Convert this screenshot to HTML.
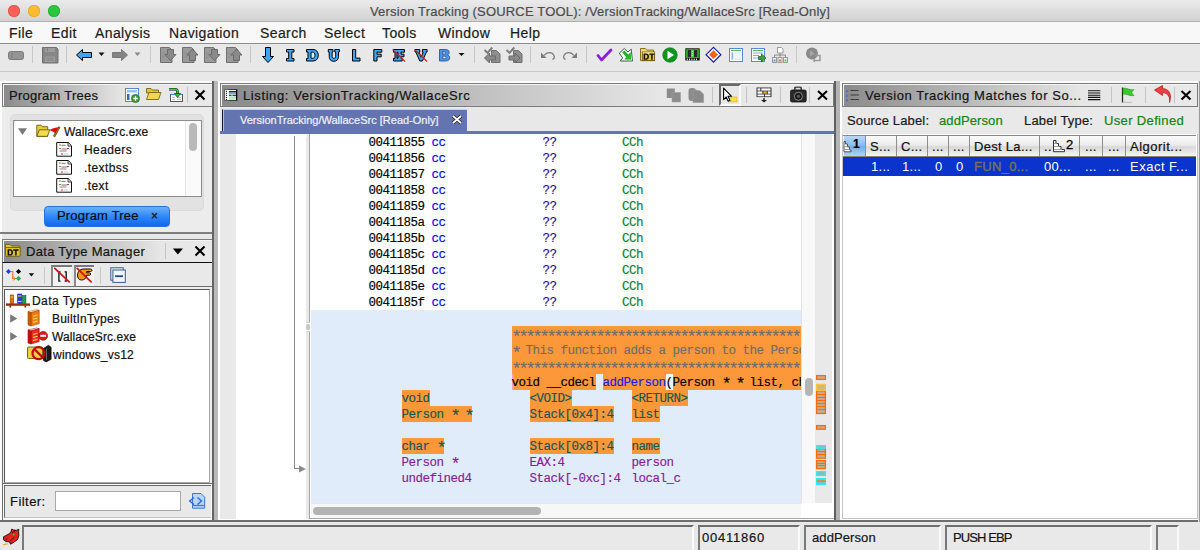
<!DOCTYPE html>
<html><head><meta charset="utf-8">
<style>
*{margin:0;padding:0;box-sizing:border-box}
html,body{width:1200px;height:550px;overflow:hidden;background:#e8e8e8;font-family:"Liberation Sans",sans-serif;font-size:13px;color:#111;position:relative}
div,span,svg{position:absolute}
.i{position:relative}
.st{font-size:17px;letter-spacing:-3.2px;line-height:0;top:3px}
.mono{-webkit-text-stroke:0.15px currentColor;font-family:"Liberation Mono",monospace;font-size:12.5px;letter-spacing:-0.5px;white-space:pre;line-height:16px}
.txt{white-space:nowrap;line-height:1;-webkit-text-stroke:0.2px currentColor}
#title{left:0;top:0;width:1200px;height:22px;background:linear-gradient(#ebebeb,#d2d2d2);border-bottom:1px solid #b1b1b1}
#menu{left:0;top:22px;width:1200px;height:22px;background:#f8f8f8;border-bottom:1px solid #8e8e8e}
#menu span{-webkit-text-stroke:0.2px #1c1c1c;top:4px;font-size:14px;letter-spacing:0.4px;color:#1c1c1c;line-height:14px}
#tb{left:0;top:44px;width:1200px;height:28px;background:#e8e8e8;border-bottom:1px solid #c8c8c8}
.sep{width:1px;background:#c9c9c9}
.hdr{height:24px;border:1px solid #7c7c7c;background:linear-gradient(90deg,#8e8e8e 0%,#e6e6e6 56%,#ebebeb 100%);box-shadow:inset 1px 1px 0 #f4f4f4}
.hdr .t{-webkit-text-stroke:0.2px #141414;top:5px;font-size:13px;color:#141414;line-height:13px;white-space:nowrap}
.hsep{top:3px;height:16px;width:1px;background:#c4c4c4}
</style></head><body>
<!-- TITLE -->
<div id="title">
  <div style="left:8px;top:5px;width:12px;height:12px;border-radius:6px;background:#fc5f57;box-shadow:inset 0 0 0 0.6px #de4a41"></div>
  <div style="left:28px;top:5px;width:12px;height:12px;border-radius:6px;background:#fdbb2e;box-shadow:inset 0 0 0 0.6px #dd9d29"></div>
  <div style="left:48px;top:5px;width:12px;height:12px;border-radius:6px;background:#2ac640;box-shadow:inset 0 0 0 0.6px #1fa832"></div>
  <span class="txt" style="left:370px;top:5px;font-size:13px;letter-spacing:0.17px;color:#4b4b4b">Version Tracking (SOURCE TOOL): /VersionTracking/WallaceSrc [Read-Only]</span>
</div>
<!-- MENU -->
<div id="menu">
  <span style="left:9px">File</span>
  <span style="left:51px">Edit</span>
  <span style="left:95px">Analysis</span>
  <span style="left:169px">Navigation</span>
  <span style="left:260px">Search</span>
  <span style="left:324px">Select</span>
  <span style="left:382px">Tools</span>
  <span style="left:438px">Window</span>
  <span style="left:510px">Help</span>
</div>
<!-- TOOLBAR -->
<div id="tb">
  <!-- TBICONS -->
</div>

<!-- LEFT COLUMN -->
<div style="left:0;top:81px;width:212px;height:2px;background:#fbfbfb"></div>
<div style="left:0;top:81px;width:2px;height:439px;background:#fbfbfb"></div>
<div style="left:220px;top:81px;width:614px;height:2px;background:#fbfbfb"></div>
<div style="left:842px;top:81px;width:358px;height:2px;background:#fbfbfb"></div>
<!-- Program Trees panel -->
<div style="left:2px;top:83px;width:211px;height:149px;background:#ececec;border-right:1px solid #9a9a9a"></div>
<div class="hdr" style="left:2px;top:83px;width:211px;background:linear-gradient(90deg,#8a8a8a 0,#e6e6e6 120px,#e9e9e9)"><span class="t" style="left:6px;letter-spacing:0.25px">Program Trees</span>
  <div class="hsep" style="left:184px"></div>
</div>
<div style="left:10px;top:114px;width:194px;height:97px;background:#e2e2e2;border-radius:5px;border:1px solid #dadada"></div>
<div style="left:13px;top:120px;width:189px;height:77px;background:#fff;border:1px solid #8c8c8c"></div>
<div style="left:185px;top:121px;width:16px;height:75px;background:#fafafa;border-left:1px solid #e6e6e6"></div>
<div style="left:189px;top:123px;width:8px;height:28px;background:#b9b9b9;border-radius:4px"></div>
<span class="txt" style="left:64px;top:126px;font-size:12px;letter-spacing:0.1px">WallaceSrc.exe</span>
<span class="txt" style="left:84px;top:144px;font-size:12px;letter-spacing:0.4px">Headers</span>
<span class="txt" style="left:84px;top:162px;font-size:12px;letter-spacing:0.4px">.textbss</span>
<span class="txt" style="left:84px;top:180px;font-size:12px;letter-spacing:0.4px">.text</span>
<div style="left:44px;top:206px;width:126px;height:21px;border-radius:4px;background:linear-gradient(#6db0fa,#2f88f8 50%,#1166f0);border:1px solid #2b6fdc"></div>
<span class="txt" style="left:57px;top:209px;font-size:13px;letter-spacing:0.18px;color:#0c0c14">Program Tree</span>
<span class="txt" style="left:151px;top:210px;font-size:12px;color:#111">×</span>
<!-- divider -->
<div style="left:0;top:232px;width:213px;height:2px;background:#7e7e7e"></div>

<!-- Data Type Manager -->
<div style="left:2px;top:239px;width:211px;height:281px;background:#ececec;border-right:1px solid #9a9a9a"></div>
<div class="hdr" style="left:2px;top:239px;width:211px;border-bottom:1px solid #111;background:linear-gradient(90deg,#8a8a8a 0,#e6e6e6 158px,#e9e9e9)"><span class="t" style="left:23px;letter-spacing:0.3px">Data Type Manager</span>
  <div class="hsep" style="left:162px"></div>
</div>
<div style="left:2px;top:263px;width:211px;height:23px;background:#e9e9e9;border-left:1px solid #bcbcbc"></div>
<div style="left:51px;top:265px;width:21px;height:21px;background:#f2f2f2;border-top:2px solid #7a7a7a;border-left:2px solid #8a8a8a"></div>
<div style="left:74px;top:265px;width:20px;height:21px;background:#f2f2f2;border-top:2px solid #7a7a7a;border-left:2px solid #8a8a8a"></div>
<div style="left:44px;top:267px;width:1px;height:17px;background:#c8c8c8"></div>
<div style="left:100px;top:267px;width:1px;height:17px;background:#c8c8c8"></div>
<div style="left:2px;top:263px;width:1px;height:257px;background:#6e6e6e"></div>
<div style="left:2px;top:286px;width:210px;height:1px;background:#6e6e6e"></div>
<div style="left:4px;top:289px;width:206px;height:194px;background:#fff;border:1px solid #a8a8a8;border-left:1px solid #585858;border-top:1px solid #585858"></div>
<span class="txt" style="left:32px;top:295px;font-size:12px;letter-spacing:0.45px">Data Types</span>
<span class="txt" style="left:52px;top:313px;font-size:12px;letter-spacing:0.22px">BuiltInTypes</span>
<span class="txt" style="left:52px;top:331px;font-size:12px;letter-spacing:0.08px">WallaceSrc.exe</span>
<span class="txt" style="left:53px;top:349px;font-size:12px;letter-spacing:0.25px">windows_vs12</span>
<!-- filter -->
<div style="left:3px;top:483px;width:209px;height:37px;background:#fafafa;border-top:1px solid #6e6e6e"></div>
<div style="left:4px;top:485px;width:207px;height:33px;background:#e9e9e9;border-top:1px solid #6a6a6a;border-left:1px solid #6a6a6a;border-bottom:1px solid #c4c4c4"></div>
<span class="txt" style="left:10px;top:495px;font-size:13px;letter-spacing:0.45px">Filter:</span>
<div style="left:55px;top:491px;width:126px;height:20px;background:#fff;border:1px solid #a8a8a8"></div>
<div style="left:212px;top:81px;width:2px;height:440px;background:#646464"></div>
<div style="left:214px;top:81px;width:4px;height:440px;background:#b9b9b9"></div>
<div style="left:218px;top:81px;width:2px;height:440px;background:#fff"></div>


<!-- LISTING -->
<!-- Listing panel -->
<div style="left:220px;top:107px;width:614px;height:27px;background:#e8e8e8"></div>
<div class="hdr" style="left:220px;top:83px;width:614px;background:linear-gradient(90deg,#8a8a8a 0,#e6e6e6 440px,#e9e9e9)"><span class="t" style="left:22px;letter-spacing:0.6px">Listing: VersionTracking/WallaceSrc</span>
  <div class="hsep" style="left:491px"></div>
  <div class="hsep" style="left:525px"></div>
  <div class="hsep" style="left:559px"></div>
  <div class="hsep" style="left:588px"></div>
  <div style="left:498px;top:0px;width:22px;height:22px;background:#e8e8e8;border-top:2px solid #6a6a6a;border-left:2px solid #6a6a6a;border-right:2px solid #fafafa;border-bottom:2px solid #fafafa"></div>
</div>
<div style="left:222px;top:109px;width:245px;height:24px;background:#6474b0;border-left:1px solid #10102a;border-top:1px solid #bcd0f8;box-shadow:inset 1px 0 0 #a8c0f0"></div>
<span class="txt" style="left:240px;top:115px;font-size:11px;color:#eef2fb">VersionTracking/WallaceSrc [Read-Only]</span>
<div style="left:220px;top:131px;width:614px;height:3px;background:#6474b0"></div>
<!-- content -->
<div style="left:220px;top:134px;width:614px;height:385px;background:#fff;overflow:hidden">
  <div style="left:0;top:0;width:16px;height:385px;background:#e9e9e9"></div>
  <div style="left:74px;top:2px;width:1px;height:333px;background:#8a8a8a"></div>
  <div style="left:74px;top:334px;width:6px;height:1px;background:#8a8a8a"></div>
  <svg style="left:78px;top:330px" width="10" height="10"><path d="M1 1.5L8 5L1 8.5z" fill="#8a8a8a"/></svg>
  <div style="left:86px;top:0;width:4px;height:385px;background:#e9e9e9;border-right:1px solid #a4a4a4"></div>
  <div style="left:91px;top:176px;width:490px;height:193px;background:#e1ecfb"></div>
  <div style="left:581px;top:0;width:14px;height:369px;background:#f8f8f8;border-left:1px solid #e2e2e2"></div>
  <div style="left:595px;top:0;width:17px;height:369px;background:#e9e9e9"></div>
  <div style="left:91px;top:369px;width:490px;height:15px;background:#f7f7f7;border-top:1px solid #e6e6e6"></div>
  <div style="left:93px;top:373px;width:228px;height:8px;background:#b3b3b3;border-radius:4px"></div>
  <div style="left:585px;top:244px;width:8px;height:18px;background:#b5b5b5;border-radius:4px"></div>
  <div style="left:90px;top:384px;width:524px;height:1px;background:#a8a8a8"></div>
  <div style="left:86px;top:0;width:1px;height:3px;background:#fff"></div>
  <div style="left:86px;top:188px;width:4px;height:10px;background:#fff;border-top:1px solid #cfcfcf;border-bottom:1px solid #cfcfcf"></div>
  <div style="left:86px;top:190px;width:4px;height:6px;background:#c8c8c8;border-radius:1.5px"></div>
</div>
<!-- code rows -->
<div class="mono" style="left:368.5px;top:135px;color:#000">00411855 <span class="i" style="color:#0000f0">cc</span>
00411856 <span class="i" style="color:#0000f0">cc</span>
00411857 <span class="i" style="color:#0000f0">cc</span>
00411858 <span class="i" style="color:#0000f0">cc</span>
00411859 <span class="i" style="color:#0000f0">cc</span>
0041185a <span class="i" style="color:#0000f0">cc</span>
0041185b <span class="i" style="color:#0000f0">cc</span>
0041185c <span class="i" style="color:#0000f0">cc</span>
0041185d <span class="i" style="color:#0000f0">cc</span>
0041185e <span class="i" style="color:#0000f0">cc</span>
0041185f <span class="i" style="color:#0000f0">cc</span></div>
<div class="mono" style="left:542.5px;top:135px;color:#1a1a8a">??
??
??
??
??
??
??
??
??
??
??</div>
<div class="mono" style="left:622px;top:135px;color:#108030">CCh
CCh
CCh
CCh
CCh
CCh
CCh
CCh
CCh
CCh
CCh</div>
<!-- function block -->
<div style="left:512px;top:326px;width:289px;height:48px;background:#fd983a"></div>
<div style="left:512px;top:374px;width:84px;height:16px;background:#fd983a"></div>
<div style="left:603px;top:374px;width:63px;height:16px;background:#fd983a"></div>
<div style="left:673px;top:374px;width:128px;height:16px;background:#fd983a"></div>
<div style="left:666px;top:374px;width:7px;height:16px;background:#eef4fc"></div>
<div style="left:512px;top:374px;width:2px;height:16px;background:#f0a0b8"></div>
<div style="left:311px;top:326px;width:490px;height:64px;overflow:hidden">
<div class="mono" style="left:200.5px;top:1px;color:#6e6e6e;font-size:17px;letter-spacing:-3.2px;line-height:16px;top:4px">*****************************************</div>
<div class="mono" style="left:200.5px;top:36px;color:#6e6e6e;font-size:17px;letter-spacing:-3.2px;line-height:16px">*****************************************</div>
<div class="mono" style="left:200.5px;top:20px;color:#6e6e6e;font-size:17px;letter-spacing:-3.2px;line-height:16px">*</div>
<div class="mono" style="left:200.5px;top:17px;color:#6e6e6e">  This function adds a person to the Person list</div>
<div class="mono" style="left:200.5px;top:49px;color:#000">void __cdecl <span class="i" style="color:#1a1ae8">addPerson</span>(Person <span class="i st">*</span> <span class="i st">*</span> list, char <span class="i st">*</span> name)</div>
</div>
<!-- params -->
<div style="left:402px;top:390px;width:28px;height:16px;background:#fd983a"></div>
<div style="left:402px;top:406px;width:70px;height:16px;background:#fd983a"></div>
<div style="left:402px;top:438px;width:42px;height:16px;background:#fd983a"></div>
<div style="left:530px;top:390px;width:42px;height:16px;background:#fd983a"></div>
<div style="left:530px;top:406px;width:84px;height:16px;background:#fd983a"></div>
<div style="left:530px;top:438px;width:84px;height:16px;background:#fd983a"></div>
<div style="left:632px;top:390px;width:56px;height:16px;background:#fd983a"></div>
<div style="left:632px;top:406px;width:28px;height:16px;background:#fd983a"></div>
<div style="left:632px;top:438px;width:28px;height:16px;background:#fd983a"></div>
<div class="mono" style="left:401.5px;top:391px;color:#0e5a52">void
Person <span class="i st">*</span> <span class="i st">*</span>

char <span class="i st">*</span>
<span class="i" style="color:#8a1a96">Person <span class="i st">*</span></span>
<span class="i" style="color:#8a1a96">undefined4</span></div>
<div class="mono" style="left:529.5px;top:391px;color:#0e5a52">&lt;VOID&gt;
Stack[0x4]:4

Stack[0x8]:4
<span class="i" style="color:#8a1a96">EAX:4</span>
<span class="i" style="color:#8a1a96">Stack[-0xc]:4</span></div>
<div class="mono" style="left:631.5px;top:391px;color:#0e5a52">&lt;RETURN&gt;
list

name
<span class="i" style="color:#8a1a96">person</span>
<span class="i" style="color:#8a1a96">local_c</span></div>
<!-- overview markers -->
<svg style="left:814px;top:370px" width="14" height="120" viewBox="814 370 14 120">
<g stroke-width="1.3" fill="#c4ac90">
<rect x="816.6" y="375.6" width="8.8" height="3.8" stroke="#ff6a00"/>
<rect x="816.6" y="391" width="8.8" height="22.5" stroke="#ff6a00"/>
<rect x="816.6" y="384.4" width="8.8" height="6" stroke="#ffc040" fill="#d0b880"/>
<rect x="816.6" y="425.6" width="8.8" height="3.6" stroke="#ff6a00"/>
<rect x="816.6" y="448.8" width="8.8" height="9.4" stroke="#ff6a00"/>
<rect x="816.6" y="460.6" width="8.8" height="8" stroke="#ff6a00"/>
<rect x="816.6" y="445.6" width="8.8" height="2.6" stroke="#28eef8" fill="#90b8b8"/>
<rect x="816.6" y="471.6" width="8.8" height="3.8" stroke="#28eef8" fill="#90b8b8"/>
<rect x="816.6" y="478.6" width="8.8" height="5.8" stroke="#28eef8" fill="#90b8b8"/>
</g>
<path d="M816.5 394.5h9M816.5 397.5h9M816.5 400.5h9M816.5 403.5h9M816.5 406.5h9M816.5 409.5h9M816.5 451.5h9M816.5 454.5h9M816.5 463.5h9M816.5 465.5h9M816.5 481h9" stroke="#ff6a00" stroke-width="1"/>
</svg>
<!-- divider right -->
<div style="left:834px;top:81px;width:2px;height:440px;background:#606060"></div>
<div style="left:836px;top:81px;width:4px;height:440px;background:#b4b4b4"></div>
<div style="left:840px;top:81px;width:2px;height:440px;background:#fff"></div>
<div style="left:0;top:520px;width:1200px;height:2px;background:#6e6e6e"></div>


<!-- VT -->
<!-- VT panel -->

<div style="left:842px;top:107px;width:356px;height:28px;background:#e9e9e9"></div>
<div class="hdr" style="left:842px;top:83px;width:356px;background:linear-gradient(90deg,#8a8a8a 0,#e6e6e6 240px,#e9e9e9)"><span class="t" style="left:22px;letter-spacing:0.55px">Version Tracking Matches for So...</span>
  <div class="hsep" style="left:268px"></div>
  <div class="hsep" style="left:302px"></div>
  <div class="hsep" style="left:331px"></div>
</div>
<span class="txt" style="left:847px;top:114px;font-size:13px;letter-spacing:0.15px;color:#1a1a1a">Source Label:</span>
<span class="txt" style="left:939px;top:114px;font-size:13px;letter-spacing:0.1px;color:#118511">addPerson</span>
<span class="txt" style="left:1024px;top:114px;font-size:13px;letter-spacing:0.2px;color:#1a1a1a">Label Type:</span>
<span class="txt" style="left:1104px;top:114px;font-size:13px;letter-spacing:0.35px;color:#118511">User Defined</span>
<div style="left:842px;top:134px;width:356px;height:385px;background:#fff;border-left:1px solid #c4c4c4;border-bottom:1px solid #c4c4c4;border-right:1px solid #c4c4c4"></div>
<div style="left:842px;top:519px;width:358px;height:1px;background:#fff"></div>
<div style="left:220px;top:519px;width:614px;height:1px;background:#fff"></div>
<div style="left:843px;top:135px;width:353px;height:22px;background:linear-gradient(#fbfbfb,#ececec 45%,#d8d8d8 55%,#f4f4f4);border-top:1px solid #8a8a8a;border-bottom:1px solid #8a8070"></div>
<div style="left:844px;top:136px;width:21px;height:20px;background:linear-gradient(#b8d8f8,#8cbef0 45%,#72aee8 55%,#b2d4f4)"></div>
<div style="left:865px;top:136px;width:1px;height:20px;background:#8e8e8e"></div>
<div style="left:896px;top:136px;width:1px;height:20px;background:#8e8e8e"></div>
<div style="left:927px;top:136px;width:1px;height:20px;background:#8e8e8e"></div>
<div style="left:948px;top:136px;width:1px;height:20px;background:#8e8e8e"></div>
<div style="left:969px;top:136px;width:1px;height:20px;background:#8e8e8e"></div>
<div style="left:1039px;top:136px;width:1px;height:20px;background:#8e8e8e"></div>
<div style="left:1079px;top:136px;width:1px;height:20px;background:#8e8e8e"></div>
<div style="left:1102px;top:136px;width:1px;height:20px;background:#8e8e8e"></div>
<div style="left:1125px;top:136px;width:1px;height:20px;background:#8e8e8e"></div>
<span class="txt" style="left:853px;top:138px;font-size:12px;font-weight:bold;color:#000">1</span>
<span class="txt" style="left:870px;top:140px;font-size:13px;letter-spacing:0.3px">S...</span>
<span class="txt" style="left:901px;top:140px;font-size:13px;letter-spacing:0.3px">C...</span>
<span class="txt" style="left:932px;top:140px;font-size:13px;letter-spacing:0.3px">...</span>
<span class="txt" style="left:953px;top:140px;font-size:13px;letter-spacing:0.3px">...</span>
<span class="txt" style="left:974px;top:140px;font-size:13px;letter-spacing:0.3px">Dest La...</span>
<span class="txt" style="left:1044px;top:140px;font-size:13px;letter-spacing:0.3px">..</span>
<span class="txt" style="left:1066px;top:138px;font-size:13px;color:#000;-webkit-text-stroke:0.3px #000">2</span>
<span class="txt" style="left:1085px;top:140px;font-size:13px;letter-spacing:0.3px">...</span>
<span class="txt" style="left:1108px;top:140px;font-size:13px;letter-spacing:0.3px">...</span>
<span class="txt" style="left:1130px;top:140px;font-size:13px;letter-spacing:0.5px">Algorit...</span>
<div style="left:843px;top:157px;width:353px;height:19px;background:#0a34cc"></div>
<span class="txt" style="left:871px;top:160px;font-size:13px;letter-spacing:0.3px;color:#fff;-webkit-text-stroke:0">1...</span>
<span class="txt" style="left:902px;top:160px;font-size:13px;letter-spacing:0.3px;color:#fff;-webkit-text-stroke:0">1...</span>
<span class="txt" style="left:935px;top:160px;font-size:13px;color:#fff;-webkit-text-stroke:0">0</span>
<span class="txt" style="left:956px;top:160px;font-size:13px;color:#fff;-webkit-text-stroke:0">0</span>
<span class="txt" style="left:974px;top:160px;font-size:13px;letter-spacing:0.3px;color:#7a7358;-webkit-text-stroke:0.4px #7a7358">FUN_0...</span>
<span class="txt" style="left:1044px;top:160px;font-size:13px;letter-spacing:0.3px;color:#fff;-webkit-text-stroke:0">00...</span>
<span class="txt" style="left:1085px;top:160px;font-size:13px;letter-spacing:0.3px;color:#fff;-webkit-text-stroke:0">...</span>
<span class="txt" style="left:1108px;top:160px;font-size:13px;letter-spacing:0.3px;color:#fff;-webkit-text-stroke:0">...</span>
<span class="txt" style="left:1130px;top:160px;font-size:13px;letter-spacing:0.5px;color:#fff;-webkit-text-stroke:0">Exact F...</span>


<!-- STATUS -->
<div style="left:1198px;top:81px;width:2px;height:441px;background:#9a9a9a;border-left:1px solid #e4e4e4"></div>
<!-- status bar -->
<div style="left:0;top:522px;width:1200px;height:28px;background:#e8e8e8"></div>
<div style="left:22px;top:525px;width:672px;height:25px;background:#e9e9e9;border-top:2px solid #6e6e6e;border-left:2px solid #7a7a7a;border-right:2px solid #fafafa"></div>
<div style="left:698px;top:525px;width:102px;height:25px;background:#e9e9e9;border-top:2px solid #6e6e6e;border-left:2px solid #7a7a7a;border-right:2px solid #fafafa"></div>
<div style="left:804px;top:525px;width:137px;height:25px;background:#e9e9e9;border-top:2px solid #6e6e6e;border-left:2px solid #7a7a7a;border-right:2px solid #fafafa"></div>
<div style="left:945px;top:525px;width:207px;height:25px;background:#e9e9e9;border-top:2px solid #6e6e6e;border-left:2px solid #7a7a7a;border-right:2px solid #fafafa"></div>
<div style="left:1156px;top:525px;width:23px;height:25px;background:#e9e9e9;border-top:2px solid #6e6e6e;border-left:2px solid #7a7a7a;border-right:2px solid #fafafa"></div>
<span class="txt" style="left:702px;top:531px;font-size:13px;letter-spacing:0.75px;color:#141414">00411860</span>
<span class="txt" style="left:812px;top:531px;font-size:13px;letter-spacing:0.1px;color:#141414">addPerson</span>
<span class="txt" style="left:953px;top:531px;font-size:13px;letter-spacing:-0.9px;color:#141414">PUSH EBP</span>
<!-- TBSVG -->
<svg style="left:0;top:0" width="1200" height="72" viewBox="0 0 1200 72" shape-rendering="geometricPrecision">
<!-- separators -->
<g fill="#c8c8c8"><rect x="32" y="46" width="1" height="17"/><rect x="66" y="46" width="1" height="17"/><rect x="150" y="46" width="1" height="17"/><rect x="250" y="46" width="1" height="17"/><rect x="474" y="46" width="1" height="17"/><rect x="530" y="46" width="1" height="17"/><rect x="586" y="46" width="1" height="17"/><rect x="796" y="46" width="1" height="17"/></g>
<!-- disabled rect -->
<rect x="8.5" y="51.5" width="15" height="8" rx="2" fill="#949494" stroke="#7a7a7a"/>
<path d="M12 53.5v4M11 53.5h2M11 57.5h2" stroke="#7e7e7e" stroke-width="0.8"/>
<!-- floppy -->
<path d="M42.5 47.5h14l1.5 1.5v14h-15.5z" fill="#878787" stroke="#707070"/>
<rect x="45" y="48" width="10" height="4" fill="#9c9c9c"/><rect x="47" y="48.5" width="1" height="2.5" fill="#777"/>
<rect x="45.5" y="57" width="9" height="4.5" fill="#8e8e8e" stroke="#a4a4a4" stroke-width="0.8"/>
<!-- back arrow -->
<path d="M76.5 55 L82.5 49.5 V52.5 H91.5 V57.5 H82.5 V60.5 Z" fill="#3aa6f7" stroke="#000" stroke-width="1" stroke-linejoin="miter"/>
<path d="M98.5 52.5h6l-3 3.5z" fill="#111"/>
<!-- fwd arrow gray -->
<path d="M127.5 55 L121.5 49.5 V52.5 H112.5 V57.5 H121.5 V60.5 Z" fill="#848484" stroke="#7a7a7a" stroke-width="1"/>
<path d="M134.5 52.5h6l-3 3.5z" fill="#888"/>
<!-- doc icons -->
<g id="doc1">
<path d="M160.5 47.5h9l2.5 2.5v12.5h-11.5z" fill="#9a9a9a" stroke="#6f6f6f"/>
<path d="M162 53h3M163 55h2M162 57h3" stroke="#888" stroke-width="0.7"/>
<path d="M167.5 49.5h6v5h2.5l-5.5 6l-5.5-6h2.5z" fill="#8a8a8a" stroke="#6a6a6a"/>
</g>
<g>
<path d="M182.5 47.5h9l2.5 2.5v12.5h-11.5z" fill="#9a9a9a" stroke="#6f6f6f"/>
<path d="M184 53h3M185 55h2M184 57h3" stroke="#888" stroke-width="0.7"/>
<path d="M189.5 60.5h6v-5.5h2.5l-5.5-6l-5.5 6h2.5z" fill="#8a8a8a" stroke="#6a6a6a"/>
</g>
<g>
<path d="M204.5 47.5h9l2.5 2.5v12.5h-11.5z" fill="#9a9a9a" stroke="#6f6f6f"/>
<path d="M206 53h3M207 55h2M206 57h3" stroke="#888" stroke-width="0.7"/>
<path d="M211.5 49.5h6v5h2.5l-5.5 6l-5.5-6h2.5z" fill="#8a8a8a" stroke="#6a6a6a"/>
</g>
<g>
<path d="M226.5 47.5h9l2.5 2.5v12.5h-11.5z" fill="#9a9a9a" stroke="#6f6f6f"/>
<path d="M228 53h3M229 55h2M228 57h3" stroke="#888" stroke-width="0.7"/>
<path d="M233.5 60.5h6v-5.5h2.5l-5.5-6l-5.5 6h2.5z" fill="#8a8a8a" stroke="#6a6a6a"/>
</g>
<!-- down arrow -->
<path d="M265.5 47.5h5v9h3l-5.5 6l-5.5-6h3z" fill="#3aa6f7" stroke="#000"/>
<!-- letters -->
<g fill="#3aa6f7" stroke="#000" stroke-width="1" fill-rule="evenodd" stroke-linejoin="miter">
<path d="M286.5 49.5h7.5v2.5h-2.2v6.5h2.2v2.5h-7.5v-2.5h2.2v-6.5h-2.2z"/>
<path d="M306.5 49.5h6.5c3.3 0 5.3 2.3 5.3 5.7c0 3.5-2 5.8-5.3 5.8h-6.5v-2.5h1.5v-6.5h-1.5z M311 52.2v6.1h1.6c1.6 0 2.4-1.2 2.4-3.05c0-1.85-0.8-3.05-2.4-3.05z"/>
<path d="M328.3 49.5h4.7v2.5h-0.9v4.2c0 1.4 0.6 2.1 1.8 2.1s1.8-0.7 1.8-2.1v-4.2h-0.9v-2.5h4.6v2.5h-0.9v4.4c0 3.2-1.8 4.9-4.7 4.9c-3 0-4.6-1.7-4.6-4.9v-4.4h-0.9z"/>
<path d="M352.5 49.5h3.2v8.6h4.3v2.9h-7.5z"/>
<path d="M373.8 49.5h8v2.7h-4.8v2h4.2v2.6h-4.2v4.2h-3.2z"/>
<path d="M393.5 49.5h11v2.7h-3.5v2h3v2.6h-3v1.5h1.2v2.7h-8.7v-2.7h1.5v-6.1h-1.5z M397 52.2v6.1h1v-6.1z"/>
<path d="M415 49.5h4.8v2.5h-0.8l2.1 5.2l2.1-5.2h-0.8v-2.5h4.7v2.5h-0.7l-4 9h-2.6l-4-9h-0.8z"/>
</g>
<path d="M392.5 49.5l12.5 12M414.5 49.5l12.5 12" stroke="#e8101a" stroke-width="1.1"/>
<path d="M439.5 49.5h5.8c2.5 0 3.9 1.1 3.9 2.9c0 1.2-0.7 2-1.7 2.4c1.4 0.4 2.2 1.5 2.2 2.9c0 2.1-1.5 3.3-4.1 3.3h-6.1z M442.7 51.9v2.2h1.8c0.8 0 1.2-0.4 1.2-1.1s-0.4-1.1-1.2-1.1z M442.7 56.2v2.5h2c0.9 0 1.4-0.45 1.4-1.25s-0.5-1.25-1.4-1.25z" fill="#4a90e8" stroke="#2c5a9a" stroke-width="0.9" fill-rule="evenodd"/>
<path d="M458.5 53h6l-3 3z" fill="#111"/>
<!-- apply icons -->
<g>
<path d="M491.5 50.5h5l3.5 3.5v8.5h-8.5z" fill="#8e8e8e" stroke="#707070"/>
<path d="M484.5 50l3 2.8l4.8-5.3" fill="none" stroke="#7e7e7e" stroke-width="2"/>
<path d="M484.5 58l5-5v3h6v4h-6v3z" fill="#8a8a8a" stroke="#6a6a6a"/>
</g>
<g>
<path d="M513.5 50.5h5l3.5 3.5v8.5h-8.5z" fill="#8e8e8e" stroke="#707070"/>
<path d="M506.5 50l3 2.8l4.8-5.3" fill="none" stroke="#7e7e7e" stroke-width="2"/>
<path d="M520 58l-5-5v3h-6v4h6v3z" fill="#8a8a8a" stroke="#6a6a6a"/>
</g>
<!-- undo/redo -->
<path d="M544 55.5c2.5-3.5 8-4 10 0c1 2-0.5 3.5-1.5 4" fill="none" stroke="#7a7a7a" stroke-width="1.2"/>
<path d="M541 52.5v5.5h5.5z" fill="#7a7a7a"/>
<path d="M574 55.5c-2.5-3.5-8-4-10 0c-1 2 0.5 3.5 1.5 4" fill="none" stroke="#7a7a7a" stroke-width="1.2"/>
<path d="M577 52.5v5.5h-5.5z" fill="#7a7a7a"/>
<!-- purple check -->
<path d="M598 55.5l3.5 4.5l9.5-10" fill="none" stroke="#8a1ee0" stroke-width="2.8" stroke-linecap="round" stroke-linejoin="round"/>
<!-- green arrow box -->
<path d="M624.2 48.5L628 52L631.2 49.2L632.5 61H620.3L622.6 57.8L619.3 53.2Z" fill="#fff" stroke="#1e5a2a" stroke-width="0.9" stroke-linejoin="round"/>
<path d="M622.3 52.6L624.5 50.6L628.3 54.4L630.8 52L631 59.6H624.2L626.2 57.2Z" fill="#2cae2c"/>
<path d="M626 55.8L630.8 55v4.6h-4z" fill="#1ec01e" opacity="0.7"/>
<!-- DT folder -->
<path d="M640.5 48.5h4.8l1.5 1.6h6.8v10.5h-13.1z" fill="#f2de70" stroke="#7a6510" stroke-width="0.9"/>
<rect x="642.3" y="52" width="12.3" height="8.6" fill="#e8c828" stroke="#6a5510" stroke-width="0.9"/>
<rect x="642.8" y="52.4" width="11.5" height="1.3" fill="#fff6c0"/>
<path d="M643.6 53.4h2.6c1.8 0 2.8 1.3 2.8 3.1s-1 3.2-2.8 3.2h-2.6z M645.1 54.7v3.7h0.9c0.9 0 1.4-0.7 1.4-1.85s-0.5-1.85-1.4-1.85z" fill="#111" fill-rule="evenodd"/><path d="M649.3 53.4h5.2v1.4h-1.85v4.9h-1.5v-4.9h-1.85z" fill="#111"/>
<!-- play circle -->
<circle cx="670" cy="55" r="7.3" fill="#11931f" stroke="#0a7a16" stroke-width="0.6"/>
<path d="M667.5 50.8v8.4l6.5-4.2z" fill="#fff"/>
<!-- chip -->
<rect x="685.3" y="48.3" width="14.4" height="12.2" fill="#111"/>
<rect x="686.3" y="49.3" width="12.4" height="8.6" fill="#2ee02e"/>
<rect x="687.6" y="50" width="3.4" height="7.2" fill="#2a2a2a"/><rect x="694" y="50" width="3.4" height="7.2" fill="#2a2a2a"/>
<path d="M691.8 51.5h1.4M691.8 53.5h1.4M691.8 55.5h1.4" stroke="#fff" stroke-width="0.7"/>
<path d="M687.3 58.6v1.6M689.6 58.6v1.6M691.9 58.6v1.6M694.2 58.6v1.6M696.5 58.6v1.6" stroke="#fff" stroke-width="1"/>
<!-- diamond -->
<path d="M713.5 47.3l7.4 7.4l-7.4 7.4l-7.4-7.4z" fill="#fff" stroke="#1a1a9a" stroke-width="1.2"/><path d="M713.5 50.3l4.4 4.4l-4.4 4.4l-4.4-4.4z" fill="#ff6400"/>
<!-- table -->
<rect x="729.5" y="48.5" width="13" height="13" fill="#fff" stroke="#5a8ad0"/>
<rect x="731" y="50" width="10" height="1" fill="#5ab858"/>
<rect x="731" y="52" width="10" height="8" fill="#e4eefa"/><path d="M731 54h10M731 56h10M731 58h10" stroke="#fff" stroke-width="0.8"/><path d="M734 52v8" stroke="#fff" stroke-width="0.8"/><rect x="731.6" y="52.5" width="1.6" height="7" fill="#6a98dc" opacity="0.7"/>
<!-- table arrow -->
<rect x="751.5" y="48.5" width="13" height="13" fill="#fff" stroke="#5a8ad0"/>
<rect x="753" y="50" width="10" height="1" fill="#5ab858"/>
<path d="M753 53h10M753 55.5h6M753 58h5" stroke="#88aadd" stroke-width="1"/>
<path d="M758.5 56.5h3v-2.5l4.5 4l-4.5 4v-2.5h-3z" fill="#3aa03a" stroke="#1c6a1c" stroke-width="0.8"/>
<!-- tree -->
<path d="M777.5 47.5h4l1.5 1.5v4h-5.5z" fill="#fff" stroke="#999"/>
<path d="M780 53v2M774.5 57v-2h11v2M780 55v2" fill="none" stroke="#888"/>
<rect x="772.5" y="57.5" width="4" height="5" fill="#fff" stroke="#999"/><rect x="778" y="57.5" width="4" height="5" fill="#fff" stroke="#999"/><rect x="783.5" y="57.5" width="4" height="5" fill="#fff" stroke="#999"/>
<rect x="773.5" y="59.5" width="2" height="2" fill="#4a8ae0"/><rect x="779" y="59.5" width="2" height="2" fill="#e86a20"/><rect x="784.5" y="59.5" width="2" height="2" fill="#4ac04a"/>
<!-- gray circle -->
<circle cx="812" cy="53.5" r="6" fill="#8a8a8a"/>
<path d="M810 50.5v6l4.5-3z" fill="#a8a8a8"/>
<path d="M815 55.5h5v5h-6" fill="none" stroke="#9a9a9a" stroke-width="1.5"/>
<path d="M815 58.5v4l-2.5-2z" fill="#9a9a9a"/>
</svg>

<!-- /TBSVG -->
<!-- ICONS -->
<svg style="left:0;top:0" width="1200" height="550" viewBox="0 0 1200 550">
<!-- ===== Program Trees header ===== -->
<!-- new tree icon -->
<rect x="125.5" y="88.5" width="13" height="13" fill="#fff" stroke="#5a88d0"/>
<rect x="127" y="90" width="10" height="2.5" fill="#9cc0ec"/>
<rect x="127" y="94" width="2.5" height="6" fill="#3a6ab8"/>
<rect x="130.5" y="94" width="6.5" height="6" fill="#dbe8f8"/>
<circle cx="135.5" cy="98.5" r="4" fill="#3c9a3c" stroke="#2a7a2a" stroke-width="0.8"/>
<path d="M133.3 98.5h4.4M135.5 96.3v4.4" stroke="#fff" stroke-width="1.3"/>
<!-- folder -->
<path d="M146.5 88.5h4.5l1.5 1.5h6v3h-12z" fill="#e0c43a" stroke="#7a6412" stroke-width="0.9"/>
<path d="M146.5 99.5l2.5-7h12l-2.5 7z" fill="#f0d850" stroke="#7a6412" stroke-width="0.9"/>
<!-- merge icon -->
<rect x="170.5" y="94.5" width="12" height="7" fill="#fff" stroke="#555"/>
<path d="M171 94.5h11" stroke="#3a8ae0" stroke-width="1.2"/>
<path d="M172 97.5h3M177 97.5h4M172 99.5h3M177 99.5h4" stroke="#aaa" stroke-width="0.8"/>
<path d="M169 89.3h6c1.8 0 2.5 1 2.5 2.5v2.5" fill="none" stroke="#1a1a1a" stroke-width="2.6"/>
<path d="M169 89.3h6c1.8 0 2.5 1 2.5 2.5v2.5" fill="none" stroke="#22dd22" stroke-width="1.4"/>
<path d="M174.5 93.5h6l-3 4z" fill="#22cc22" stroke="#1a1a1a" stroke-width="0.6"/>
<!-- X -->
<path d="M195.5 90.5l9 9M204.5 90.5l-9 9" stroke="#000" stroke-width="2.1"/>

<!-- ===== Program tree contents ===== -->
<path d="M18 128.3h9l-4.5 6.7z" fill="#7a7a7a"/>
<path d="M36.8 125.2h4.3l1.4 1.5h5.2v9.6h-10.9z" fill="#e6cc38" stroke="#6e5a10" stroke-width="0.9"/>
<path d="M36.8 136.3l2.6-6.5h10.4l-2.4 6.5z" fill="#f4dc50" stroke="#6e5a10" stroke-width="0.9"/>
<path d="M59.5 126.8l-5.5 9.8" stroke="#5a4a08" stroke-width="2.2"/><path d="M59.5 126.8l-5.5 9.8" stroke="#b08a20" stroke-width="1"/>
<path d="M59 127.3c-3 0.2-6 0.8-9.6 2.6c2.4 0.8 4.4 1.8 5.8 3.5z" fill="#e00c10"/>
<g id="docic">
<path d="M56.7 142.5h11.5l3.3 3.3v10.4h-14.8z" fill="#fff" stroke="#111" stroke-width="1"/>
<path d="M68 142.5v3.5h3.5" fill="none" stroke="#111" stroke-width="0.8"/>
<path d="M59 145h2M59 148.5h2" stroke="#8a8a30" stroke-width="1"/><path d="M61.5 145.3h4M61.5 149h6" stroke="#666" stroke-width="0.9"/>
<path d="M59.5 151h7" stroke="#999" stroke-width="1.2"/><path d="M61 154h2" stroke="#d02020" stroke-width="1"/><path d="M64 154h4" stroke="#bbb" stroke-width="0.8"/><path d="M67 148.5h2" stroke="#b04020" stroke-width="1"/>
</g>
<g transform="translate(0,18)">
<path d="M56.7 142.5h11.5l3.3 3.3v10.4h-14.8z" fill="#fff" stroke="#111" stroke-width="1"/>
<path d="M68 142.5v3.5h3.5" fill="none" stroke="#111" stroke-width="0.8"/>
<path d="M59 145h2M59 148.5h2" stroke="#8a8a30" stroke-width="1"/><path d="M61.5 145.3h4M61.5 149h6" stroke="#666" stroke-width="0.9"/>
<path d="M59.5 151h7" stroke="#999" stroke-width="1.2"/><path d="M61 154h2" stroke="#d02020" stroke-width="1"/><path d="M64 154h4" stroke="#bbb" stroke-width="0.8"/><path d="M67 148.5h2" stroke="#b04020" stroke-width="1"/>
</g>
<g transform="translate(0,36)">
<path d="M56.7 142.5h11.5l3.3 3.3v10.4h-14.8z" fill="#fff" stroke="#111" stroke-width="1"/>
<path d="M68 142.5v3.5h3.5" fill="none" stroke="#111" stroke-width="0.8"/>
<path d="M59 145h2M59 148.5h2" stroke="#8a8a30" stroke-width="1"/><path d="M61.5 145.3h4M61.5 149h6" stroke="#666" stroke-width="0.9"/>
<path d="M59.5 151h7" stroke="#999" stroke-width="1.2"/><path d="M61 154h2" stroke="#d02020" stroke-width="1"/><path d="M64 154h4" stroke="#bbb" stroke-width="0.8"/><path d="M67 148.5h2" stroke="#b04020" stroke-width="1"/>
</g>
<!-- scroll thumb on PT handled in html -->
<!-- button x -->

<!-- ===== DTM header ===== -->
<path d="M5.5 244.5h4.5l1.5 1.5h8.5v3h-14.5z" fill="#e6c83a" stroke="#6e5a10" stroke-width="0.9"/>
<rect x="5.5" y="247.5" width="14.7" height="8.8" rx="1" fill="#dcc030" stroke="#6e5a10" stroke-width="0.9"/>
<path d="M7.6 249.3h2.6c1.8 0 2.8 1.3 2.8 3.1s-1 3.2-2.8 3.2h-2.6z M9.1 250.6v3.7h0.9c0.9 0 1.4-0.7 1.4-1.85s-0.5-1.85-1.4-1.85z" fill="#111" fill-rule="evenodd"/><path d="M13.3 249.3h5.2v1.4h-1.85v4.9h-1.5v-4.9h-1.85z" fill="#111"/>
<path d="M172.8 248.6h10.2l-5.1 6z" fill="#000"/>
<path d="M195.5 246.5l9 9M204.5 246.5l-9 9" stroke="#000" stroke-width="2.1"/>
<!-- ===== DTM toolbar ===== -->
<path d="M11 271.5h1.8v7h3.5" fill="none" stroke="#f07818" stroke-width="1.2"/>
<path d="M13.3 276.5l2 2l-2 2" fill="none" stroke="#f07818" stroke-width="1"/>
<path d="M8.5 269l2.5 2.5l-2.5 2.5l-2.5-2.5z" fill="#1a3cf0"/>
<path d="M18.5 269l2.6 2.5l-2.6 2.6l-2.6-2.6z" fill="#000"/>
<path d="M18.5 276l2.6 2.5l-2.6 2.6l-2.6-2.6z" fill="#22b040"/>
<path d="M28.7 273.2h5.5l-2.75 3.2z" fill="#111"/>
<path d="M60.5 271.8h-1.6v9.4h1.6M64.6 271.8h1.6v9.4h-1.6" fill="none" stroke="#111" stroke-width="1.3"/>
<path d="M54.3 267.9l15.4 14.4" stroke="#d00a10" stroke-width="1.6"/>
<path d="M77.5 275c0-2.5 1.5-4.5 3.5-5.5l2-0.5h7.5c1 0 1.5 0.6 1.5 1.3s-0.5 1.2-1.5 1.2h-4v1.3h3c0.8 0 1.2 0.6 1.2 1.2s-0.4 1.2-1.2 1.2h-3c0 2.5-1.5 4.8-5 4.8c-2.8 0-4-2-4-5z" fill="#f59a10" stroke="#111" stroke-width="1"/>
<path d="M76.7 267.9l14.9 14.4" stroke="#d00a10" stroke-width="1.6"/>
<rect x="110.8" y="267.8" width="12.4" height="12.4" fill="#eef2fa" stroke="#3a5a8a" stroke-width="1"/>
<rect x="112.9" y="270" width="12.4" height="12.4" fill="#f2f6fc" stroke="#3a5a8a" stroke-width="1"/>
<rect x="115" y="275.3" width="8" height="1.8" fill="#2a4a80"/>
<!-- ===== DTM tree ===== -->
<rect x="10.2" y="295" width="3.4" height="8.6" fill="#e07010" stroke="#8a3a08" stroke-width="0.6"/>
<rect x="10.6" y="296.5" width="2.6" height="1" fill="#f8d040"/>
<rect x="17.7" y="294" width="4.1" height="9.6" fill="#2a3ae0" stroke="#10207a" stroke-width="0.6"/>
<rect x="18" y="295.5" width="3.5" height="1" fill="#f8e040"/><rect x="18" y="301" width="3.5" height="1" fill="#f8e040"/>
<rect x="22.2" y="295.5" width="3.7" height="8.1" fill="#20a050" stroke="#0a5a28" stroke-width="0.6"/>
<rect x="6" y="303.4" width="24" height="2.4" fill="#9a3010"/>
<rect x="9.5" y="305.5" width="1.6" height="2" fill="#7a2008"/><rect x="24.5" y="305.5" width="1.6" height="2" fill="#7a2008"/>
<path d="M10.2 314.3l7.1 4.2l-7.1 4.2z" fill="#7a7a7a"/>
<path d="M10.2 332l7.1 4.4l-7.1 4.4z" fill="#7a7a7a"/>
<path d="M28 311.6L36.5 309.6L39.2 310.3L31 312.6Z" fill="#fff" stroke="#c05a08" stroke-width="0.6"/>
<path d="M31 312.6L39.2 310.3V323.6L31 326Z" fill="#ee7a14" stroke="#a04a06" stroke-width="0.6"/>
<path d="M28 311.6L31 312.6V326L28 325Z" fill="#c85c08" stroke="#a04a06" stroke-width="0.6"/>
<path d="M33 316.3l4.5-1.3M33 319.3l4.5-1.3M33 322.3l4.5-1.3" stroke="#f8e050" stroke-width="1.1"/>
<path d="M28 330L36.5 328L39.2 328.7L31 331Z" fill="#fff" stroke="#b01010" stroke-width="0.6"/>
<path d="M31 331L39.2 328.7V341.6L31 344Z" fill="#f02828" stroke="#900a0a" stroke-width="0.6"/>
<path d="M28 330L31 331V344L28 343Z" fill="#c81010" stroke="#900a0a" stroke-width="0.6"/>
<path d="M33 334.5l4.5-1.3M33 337.5l4.5-1.3M33 340.5l4.5-1.3" stroke="#f8e050" stroke-width="1.1"/>
<circle cx="43.2" cy="335.8" r="4.4" fill="#e01818" stroke="#8a0a0a" stroke-width="0.7"/>
<rect x="40.3" y="334.8" width="5.8" height="2" fill="#fff"/>
<rect x="27.5" y="347" width="15" height="11.5" rx="1" fill="#e8d040" stroke="#6e5a10" stroke-width="0.9"/>
<path d="M43.5 348.5l5-3.2l2.6 2v12l-5 2.6l-2.6-1.5z" fill="#1a1a1a" stroke="#000" stroke-width="0.7"/>
<path d="M46.5 348.5v11.5" stroke="#777" stroke-width="0.8"/>
<circle cx="38.5" cy="353.2" r="6" fill="none" stroke="#c00a0a" stroke-width="2.2"/>
<path d="M34.3 349l8.4 8.4" stroke="#c00a0a" stroke-width="2.2"/>
<!-- ===== filter icon ===== -->
<path d="M192.5 493.5h8.5l3.7 3.7v11h-12.2z" fill="#b8d4f8" stroke="#3a78d8" stroke-width="1"/>
<path d="M193 505.5h11" stroke="#3a78d8" stroke-width="1.2"/>
<path d="M194 497.5l-4.3 3.5l4.3 3.5M197.5 497.5l4 3.5l-4 3.5" fill="none" stroke="#2a6ad8" stroke-width="1.4"/>
<!-- ===== dragon ===== -->
<path d="M3.5 536.8L3.5 539.8L6 541.6L9.5 541.8L10.5 544.2L13.5 542.5L17.5 539.5L18.8 535.5L18.6 531.5L18.8 529.2L16.5 530.3L13.5 530L11.8 529L11 531.5L9.5 533.5L7 535z" fill="#ee1c1c" stroke="#111" stroke-width="0.9" stroke-linejoin="round"/>
<path d="M12 533l3.5-2.5M9.5 541.5l5-4.5" stroke="#111" stroke-width="0.8"/>
<circle cx="13.6" cy="534.5" r="1" fill="#22dd22"/>
<circle cx="6.5" cy="539.3" r="0.8" fill="#111"/>
<path d="M3 544.7l4.5-0.8" stroke="#f8a030" stroke-width="1.1"/>
<!-- ===== Listing header icons ===== -->
<rect x="225" y="89.6" width="12" height="10.8" fill="#e8f4e8" stroke="#222" stroke-width="0.8"/>
<rect x="225.2" y="89.8" width="3.3" height="10.4" fill="#fff"/>
<g fill="#000"><circle cx="226.5" cy="91.3" r="0.6"/><circle cx="226.5" cy="93.3" r="0.6"/><circle cx="226.5" cy="95.3" r="0.6"/><circle cx="226.5" cy="97.3" r="0.6"/><circle cx="226.5" cy="99.3" r="0.6"/></g>
<rect x="229" y="91" width="7" height="1.6" fill="#1a2a7a"/><rect x="229" y="92.6" width="7" height="1.6" fill="#8aa8e0"/><rect x="229" y="94.8" width="2.5" height="1" fill="#0a1a4a"/><rect x="232.5" y="94.8" width="3.5" height="1" fill="#0a1a4a"/>
<rect x="229" y="96.5" width="7" height="3" fill="#b8e8c0"/>
<path d="M236.5 89.6v10.8" stroke="#000" stroke-width="1"/>
<!-- copy icons gray -->
<rect x="666.8" y="88.5" width="8" height="9.5" fill="#8c8c8c"/><rect x="672" y="92.5" width="8.5" height="9.5" fill="#8c8c8c" stroke="#9a9a9a" stroke-width="0.5"/>
<path d="M688.5 91c0-2.5 1.5-3 4-3s3.5 1 3.5 3v7c0 2.5-1 3-3.5 3s-4-0.5-4-3z" fill="#8c8c8c"/>
<path d="M693 93c0-2.2 1.3-2.7 3.8-2.7c3 0 4.2 1 6.3 3.5c0.5 0.5 0.5 1 0.5 1.7v7h-10.6z" fill="#8a8a8a" stroke="#9c9c9c" stroke-width="0.6"/>
<!-- cursor icon inside pressed btn -->
<rect x="728.3" y="97" width="8.6" height="4.8" fill="#ffe040" stroke="#f0b020" stroke-width="0.7"/>
<path d="M723.6 88.2v11.4l2.6-2.6l2 4.2l1.8-0.9l-2-4h3.6z" fill="#fff" stroke="#000" stroke-width="1.1" stroke-linejoin="round"/>
<!-- field icon -->
<rect x="756.5" y="87.5" width="15" height="9.6" fill="#333"/>
<g fill="#fff"><rect x="757.5" y="88.4" width="2.8" height="2.2"/><rect x="761.3" y="88.4" width="9.2" height="2.2"/><rect x="757.5" y="91.4" width="4.8" height="2.3"/><rect x="767.8" y="91.4" width="2.7" height="2.3"/><rect x="757.5" y="94.5" width="6.5" height="1.8"/><rect x="765" y="94.5" width="5.5" height="1.8"/></g>
<rect x="763.3" y="91.4" width="3.5" height="2.3" fill="#f8a830"/>
<path d="M764 98.3v2.5" stroke="#222" stroke-width="1.6"/><path d="M761 100h6l-3 2.6z" fill="#222"/>
<!-- camera -->
<rect x="790.5" y="90" width="15.7" height="12" rx="1.6" fill="#2a2a2a" stroke="#111" stroke-width="0.8"/>
<rect x="794.5" y="87" width="7" height="3.5" rx="0.8" fill="#555" stroke="#111" stroke-width="0.7"/>
<rect x="795.8" y="87.8" width="4.5" height="1.5" fill="#ddd"/>
<circle cx="798.4" cy="96.3" r="4" fill="#111" stroke="#999" stroke-width="0.9"/>
<circle cx="798.4" cy="96.3" r="1.7" fill="#555"/>
<path d="M818 91l9 8.5M827 91l-9 8.5" stroke="#000" stroke-width="2"/>
<!-- tab X -->
<path d="M453 116l8 7M461 116l-8 7" stroke="#222" stroke-width="3.4"/>
<path d="M453 116l8 7M461 116l-8 7" stroke="#fff" stroke-width="1.8"/>

<!-- ===== VT header icons ===== -->
<g fill="#3a7ae0"><rect x="846" y="90" width="2.2" height="2.2"/><rect x="846" y="94.6" width="2.2" height="2.2"/><rect x="846" y="99" width="2.2" height="2.2"/></g>
<path d="M850.5 90.5h8M850.5 95h8.5M850.5 99.5h8.5" stroke="#3a3a3a" stroke-width="1.2"/>
<path d="M1088 90.8h12.3M1088 93h12.3M1088 95.2h12.3M1088 97.4h12.3M1088 99.6h12.3" stroke="#111" stroke-width="1.1"/>
<path d="M1122.5 87.5v15" stroke="#2a2a2a" stroke-width="1.3"/>
<path d="M1123 88c3 0 5 1 7 1.5c1.5 0.3 3 0.2 4 0l-2.5 3l2.5 3c-1 0.2-2.5 0.3-4 0c-2-0.5-4-1.5-7-1.5z" fill="#3ac82a" stroke="#1e8a1a" stroke-width="0.5"/>
<path d="M1123 102.3h9" stroke="#bbb" stroke-width="1"/>
<path d="M1169.5 102.5c1-5-1.5-9.5-7-10v3l-8-5.5l8-4.5v3c7 0.5 9.5 6 7 14z" fill="#f04040" stroke="#a01010" stroke-width="0.7"/>
<path d="M1181.5 91l9 8.5M1190.5 91l-9 8.5" stroke="#000" stroke-width="2.1"/>
<!-- VT sort icons -->
<path d="M844 141.5h1.5v2.5h2v3h2v3h1.5v1.8h-7z" fill="#fff" stroke="#444" stroke-width="0.9" stroke-linejoin="round"/>
<path d="M844.5 146.5h3.5M844.5 149.5h5.5" stroke="#888" stroke-width="0.8"/>
<path d="M1053.5 140.5h2.5v3h2.5v3h2.5v3h3.5v2.2h-11z" fill="#fff" stroke="#333" stroke-width="1" stroke-linejoin="round"/>
<path d="M1054 143.5h3M1054 146.5h5.5M1054 149.5h8" stroke="#999" stroke-width="0.9"/>
</svg>

<!-- /ICONS -->
</body></html>
